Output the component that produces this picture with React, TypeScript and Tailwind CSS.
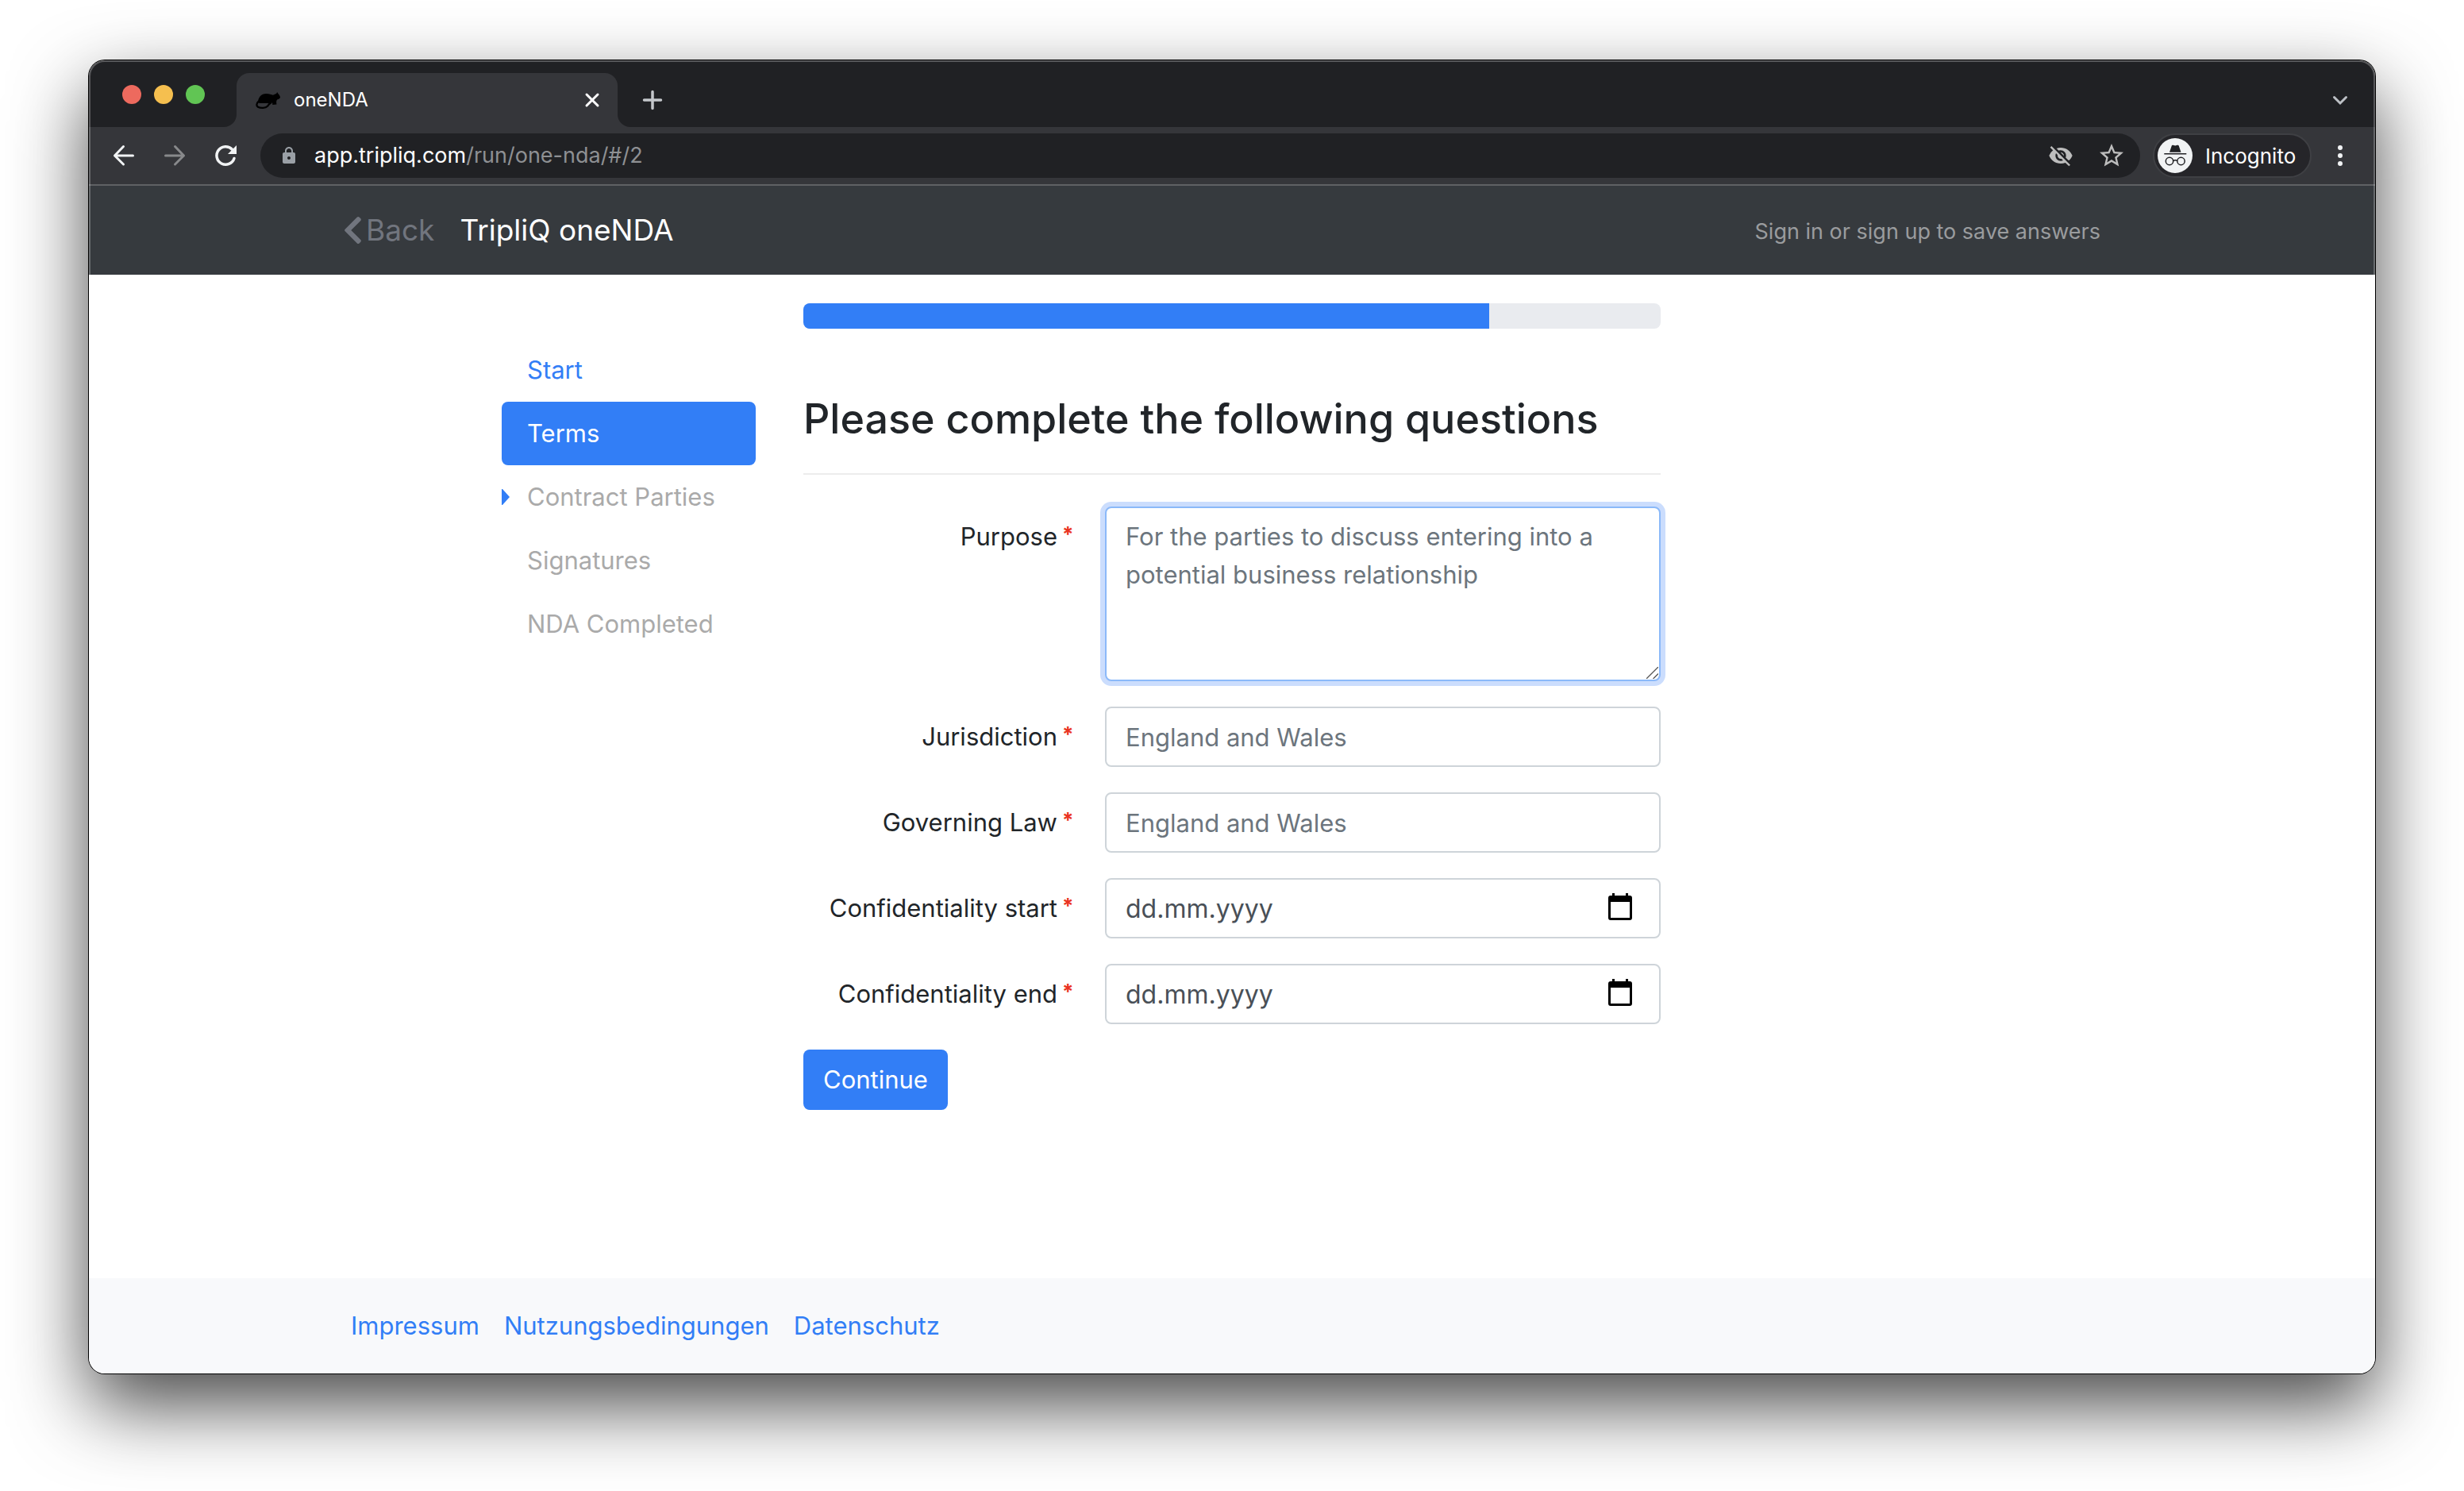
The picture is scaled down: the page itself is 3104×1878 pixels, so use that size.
import type { ReactNode } from "react";
import { FaChevronLeft } from "react-icons/fa";
import { MdLock, MdStarBorder, MdVisibilityOff } from "react-icons/md";

function RatIcon() {
  return (
    <svg viewBox="66 76 98 68" className="h-[23px] w-8 shrink-0" aria-hidden="true">
      <path
        d="M75 116C76 98 89 83 108 84C119 84 127 88 133 89C138 88 142 85 146 84L149 78L153 84C158 88 161 95 161 98C160 104 154 105 149 107C147 110 146 113 146 118L147 125L131 127C131 123 132 120 129 117C124 120 120 123 112 121C100 120 86 122 79 120Z"
        fill="#000"
      />
      <path d="M76 115C69 122 68 131 75 135C86 141 104 140 112 132C118 125 120 121 126 118" fill="none" stroke="#000" strokeWidth="7" strokeLinecap="round" />
      <path d="M80 127C92 130 103 128 112 121" fill="none" stroke="#35363a" strokeWidth="3" />
    </svg>
  );
}

function IncognitoIcon() {
  return (
    <svg viewBox="0 0 44 44" className="size-11 shrink-0" aria-hidden="true">
      <circle cx="22" cy="22" r="22" fill="#f1f3f4" />
      <path d="M15 17.8L17.8 9.6Q18.2 8.4 19.6 8.8L22.2 9.5L24.8 8.8Q26.3 8.4 26.7 9.6L29.5 17.8Z" fill="#202124" />
      <path d="M8.3 19.8H36.3" stroke="#202124" strokeWidth="1.5" />
      <g fill="none" stroke="#202124" strokeWidth="1.5">
        <circle cx="15" cy="29" r="4.7" />
        <circle cx="29.5" cy="29" r="4.7" />
        <path d="M19.6 28.6Q22.2 27 24.9 28.6" />
      </g>
    </svg>
  );
}

function CalendarIcon() {
  return (
    <svg viewBox="0 0 30 34" className="h-[34px] w-[30px]" aria-hidden="true">
      <path d="M5 0H8V3H22V0H25V3H27Q30 3 30 6V31Q30 34 27 34H3Q0 34 0 31V6Q0 3 3 3H5ZM3 11V31H27V11Z" fill="#000" fillRule="evenodd" />
    </svg>
  );
}

function ToolButton({ label, children }: { label: string; children: ReactNode }) {
  return (
    <button type="button" aria-label={label} className="flex size-10 shrink-0 items-center justify-center">
      {children}
    </button>
  );
}

function TabStrip() {
  return (
    <div className="flex h-[84px] items-end bg-[#202124] pr-6">
      <div className="flex h-full items-center gap-4 pt-0.5 pl-[42px]">
        <button type="button" aria-label="Close window" className="size-6 rounded-full bg-[#ed6a5e]" />
        <button type="button" aria-label="Minimize window" className="size-6 rounded-full bg-[#f5bf4f]" />
        <button type="button" aria-label="Zoom window" className="size-6 rounded-full bg-[#61c554]" />
      </div>
      <div className="relative ml-10 flex h-[68px] w-[480px] items-center rounded-t-2xl bg-[#35363a] pr-4 pl-6">
        <svg viewBox="0 0 16 16" className="absolute right-full bottom-0 size-4" aria-hidden="true">
          <path d="M16 0V16H0A16 16 0 0 0 16 0Z" fill="#35363a" />
        </svg>
        <svg viewBox="0 0 16 16" className="absolute bottom-0 left-full size-4" aria-hidden="true">
          <path d="M0 0V16H16A16 16 0 0 1 0 0Z" fill="#35363a" />
        </svg>
        <RatIcon />
        <span className="ml-4 flex-1 text-2xl text-white">oneNDA</span>
        <button type="button" aria-label="Close tab" className="flex size-8 items-center justify-center">
          <svg viewBox="0 0 32 32" className="size-8" aria-hidden="true">
            <path d="M9 9L23 23M23 9L9 23" stroke="#fff" strokeWidth="3" strokeLinecap="round" />
          </svg>
        </button>
      </div>
      <button type="button" aria-label="New tab" className="ml-7 flex h-[68px] w-8 items-center justify-center">
        <svg viewBox="0 0 32 32" className="size-8" aria-hidden="true">
          <path d="M16 5.5V26.5M5.5 16H26.5" stroke="#c4c7cb" strokeWidth="3.5" strokeLinecap="round" />
        </svg>
      </button>
      <button type="button" aria-label="Search tabs" className="ml-auto flex h-[68px] w-10 items-center justify-center">
        <svg viewBox="0 0 40 40" className="size-10" aria-hidden="true">
          <path d="M12.5 16.5L20 24L27.5 16.5" fill="none" stroke="#bdc1c6" strokeWidth="3" strokeLinecap="round" />
        </svg>
      </button>
    </div>
  );
}

function Toolbar() {
  return (
    <div className="flex h-[74px] items-center border-b-2 border-[#5f6164] bg-[#35363a] px-6">
      <div className="flex gap-6">
        <ToolButton label="Back">
          <svg viewBox="0 0 40 40" className="size-10" aria-hidden="true">
            <path d="M31.5 20H8.5M19.5 8.5L8.5 20L19.5 31" fill="none" stroke="#f1f3f4" strokeWidth="3" strokeLinecap="round" strokeLinejoin="round" />
          </svg>
        </ToolButton>
        <ToolButton label="Forward">
          <svg viewBox="0 0 40 40" className="size-10" aria-hidden="true">
            <path d="M8.5 20H31.5M20.5 8.5L31.5 20L20.5 31" fill="none" stroke="#88898b" strokeWidth="3" strokeLinecap="round" strokeLinejoin="round" />
          </svg>
        </ToolButton>
        <ToolButton label="Reload">
          <svg viewBox="0 0 40 40" className="size-10" aria-hidden="true">
            <path d="M31 23.5A11.3 11.3 0 1 1 28.5 12.2" fill="none" stroke="#f1f3f4" strokeWidth="3.5" strokeLinecap="round" />
            <path d="M34 7V18H23Z" fill="#f1f3f4" />
          </svg>
        </ToolButton>
      </div>
      <div className="ml-6 flex h-14 flex-1 items-center rounded-full bg-[#202124] pr-4 pl-6">
        <MdLock className="size-6 shrink-0 text-[#9aa0a6]" aria-hidden="true" />
        <div className="ml-5 flex-1 text-[27px] text-[#8e9093]">
          <span className="text-white">app.tripliq.com</span>/run/one-nda/#/2
        </div>
        <div className="flex gap-6">
          <ToolButton label="Third-party cookies blocked">
            <MdVisibilityOff className="size-8 text-[#bdbdbd]" />
          </ToolButton>
          <ToolButton label="Bookmark this tab">
            <MdStarBorder className="size-9 text-[#bdbdbd]" />
          </ToolButton>
        </div>
      </div>
      <button type="button" className="ml-4 flex h-14 w-[200px] items-center rounded-full border-2 border-[#3f4044] bg-[#252529] pl-1">
        <IncognitoIcon />
        <span className="ml-4 text-[26px] text-white">Incognito</span>
      </button>
      <div className="ml-4">
        <ToolButton label="Menu">
          <svg viewBox="0 0 40 40" className="size-10" aria-hidden="true">
            <g fill="#f1f3f4">
              <circle cx="20" cy="10" r="3" />
              <circle cx="20" cy="20" r="3" />
              <circle cx="20" cy="30" r="3" />
            </g>
          </svg>
        </ToolButton>
      </div>
    </div>
  );
}

function SiteHeader() {
  return (
    <header className="bg-[#363a3e]">
      <div className="mx-auto flex h-28 max-w-[2280px] items-center pr-[46px] pl-5">
        <a href="#back" className="flex items-center text-[37px] text-[#71757e]">
          <FaChevronLeft className="h-10 w-[25px]" aria-hidden="true" />
          <span className="ml-1">Back</span>
        </a>
        <a href="#home" className="ml-8 text-[37px] text-white">TripliQ oneNDA</a>
        <a href="#signin" className="mt-1 ml-auto text-[27px] text-[#9a9c9e]">Sign in or sign up to save answers</a>
      </div>
    </header>
  );
}

const steps = [
  { label: "Start", style: "text-[#327ef6]" },
  { label: "Terms", style: "bg-[#327ef6] text-white" },
  { label: "Contract Parties", style: "text-[#aaaaaa]", marker: true },
  { label: "Signatures", style: "text-[#aaaaaa]" },
  { label: "NDA Completed", style: "text-[#aaaaaa]" },
];

function Steps() {
  return (
    <nav aria-label="Sections" className="col-span-2 col-start-2 px-[30px] pt-11">
      {steps.map((s) => (
        <a key={s.label} href="#step" className={`relative block rounded-lg px-8 py-4 leading-[48px] ${s.style}`}>
          {s.marker && (
            <svg viewBox="0 0 10 20" className="absolute top-[30px] left-0 h-5 w-2.5" aria-hidden="true">
              <path d="M0 0H1L10 10L1 20H0Z" fill="#327ef6" />
            </svg>
          )}
          {s.label}
        </a>
      ))}
    </nav>
  );
}

function Field({ id, label, children }: { id: string; label: string; children: ReactNode }) {
  return (
    <div className="-mx-[30px] mb-8 grid grid-cols-3">
      <label htmlFor={id} className="px-[30px] py-[14px] text-right leading-[48px]">
        <span className="relative">
          {label}
          <span className="absolute -top-2 left-full ml-1.5 text-[26px] font-bold text-[#ea3323]">*</span>
        </span>
      </label>
      <div className="relative col-span-2 px-[30px]">{children}</div>
    </div>
  );
}

const inputClass = "block h-[76px] w-full rounded-lg border-2 border-[#ced4d9] bg-white px-6 outline-none";

function TextField({ id, label }: { id: string; label: string }) {
  return (
    <Field id={id} label={label}>
      <input id={id} type="text" placeholder="England and Wales" className={`${inputClass} placeholder:text-[#6c757d]`} />
    </Field>
  );
}

function DateField({ id, label }: { id: string; label: string }) {
  return (
    <Field id={id} label={label}>
      <input id={id} type="text" placeholder="dd.mm.yyyy" className={`${inputClass} text-[32px] placeholder:text-[#495057]`} />
      <button type="button" aria-label={`Pick date: ${label}`} className="absolute inset-y-0 right-[66px] flex items-center pb-1">
        <CalendarIcon />
      </button>
    </Field>
  );
}

function Questions() {
  return (
    <div className="col-span-6 px-[30px]">
      <div role="progressbar" aria-label="Progress" aria-valuenow={80} aria-valuemin={0} aria-valuemax={100} className="h-8 overflow-hidden rounded-lg bg-[#e9ebef]">
        <div className="h-full w-4/5 bg-[#327ef6]" />
      </div>
      <h1 className="mt-20 mb-10 border-b-2 border-[#ececec] pb-[34px] text-[52px] leading-[68px] font-medium">
        Please complete the following questions
      </h1>
      <form>
        <Field id="purpose" label="Purpose">
          <textarea
            id="purpose"
            placeholder={"For the parties to discuss entering into a potential business relationship"}
            className="block h-[220px] w-full resize-none rounded-lg border-2 border-[#8bb9f9] bg-white px-6 py-3 leading-[48px] shadow-[0_0_0_6px_#cbddfd] outline-none placeholder:text-[#6c757d]"
          />
          <svg viewBox="0 0 15 15" className="absolute right-[33px] bottom-[3px] size-[15px]" aria-hidden="true">
            <path d="M0 15L15 0M8.5 15L15 8.5" stroke="#555" strokeWidth="1.3" />
          </svg>
        </Field>
        <TextField id="jurisdiction" label="Jurisdiction" />
        <TextField id="law" label="Governing Law" />
        <DateField id="start" label="Confidentiality start" />
        <DateField id="end" label="Confidentiality end" />
        <button type="button" className="block h-[76px] rounded-lg bg-[#327ef6] px-[25px] text-white">Continue</button>
      </form>
    </div>
  );
}

export default function App() {
  return (
    <div className="flex min-h-screen flex-col bg-white px-28 pt-[76px] pb-[148px] font-[Inter,'Liberation_Sans',sans-serif]">
      <div className="relative flex flex-1 flex-col overflow-hidden rounded-[20px] text-[31px] text-[#212529] shadow-[0_0_0_1px_#000,0_40px_96px_rgba(0,0,0,0.72)]">
        <TabStrip />
        <Toolbar />
        <SiteHeader />
        <main className="flex-1 bg-white pt-9 pb-16">
          <div className="mx-auto grid max-w-[2280px] grid-cols-12">
            <Steps />
            <Questions />
          </div>
        </main>
        <footer className="bg-[#f8f9fb]">
          <nav aria-label="Legal" className="mx-auto flex h-[120px] max-w-[2280px] items-center gap-[31px] px-[30px] text-[#327ef6]">
            <a href="#impressum">Impressum</a>
            <a href="#terms">Nutzungsbedingungen</a>
            <a href="#privacy">Datenschutz</a>
          </nav>
        </footer>
        <div className="pointer-events-none absolute inset-x-0 top-0 h-[270px] rounded-t-[20px] border-x-2 border-t-2 border-white/25" />
      </div>
    </div>
  );
}
